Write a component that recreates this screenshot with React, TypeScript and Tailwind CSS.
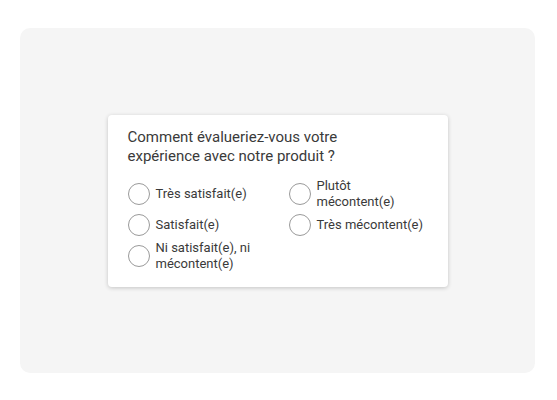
import React from "react";

const Radio = ({ label }: { label: React.ReactNode }) => (
  <div className="flex items-center gap-[6px]">
    <span className="w-[22px] h-[22px] rounded-full border border-[#9a9a9a] bg-white shrink-0" />
    <span className="text-[13px] leading-[16px] text-[#3a3a3a]">{label}</span>
  </div>
);

export default function App() {
  return (
    <div className="w-[557px] h-[400px] bg-white pt-[28px]" style={{ fontFamily: "Roboto, 'Noto Sans', sans-serif" }}>
      <div className="ml-[20px] w-[515px] h-[345px] bg-[#f5f5f5] rounded-[10px] flex items-center justify-center">
        <div className="w-[340px] bg-white rounded-[4px] shadow-[0_1px_4px_rgba(0,0,0,0.2)] pl-[20px] pr-[16px] pt-[13px] pb-[15px]">
          <div className="text-[15px] leading-[19px] text-[#3a3a3a]">
            Comment évalueriez-vous votre
            <br />
            expérience avec notre produit ?
          </div>
          <div className="mt-[12px] grid grid-cols-[161px_1fr] gap-y-[4px] items-center">
            <Radio label="Très satisfait(e)" />
            <Radio label={<>Plutôt<br />mécontent(e)</>} />
            <Radio label="Satisfait(e)" />
            <Radio label="Très mécontent(e)" />
            <Radio label={<>Ni satisfait(e), ni<br />mécontent(e)</>} />
          </div>
        </div>
      </div>
    </div>
  );
}
